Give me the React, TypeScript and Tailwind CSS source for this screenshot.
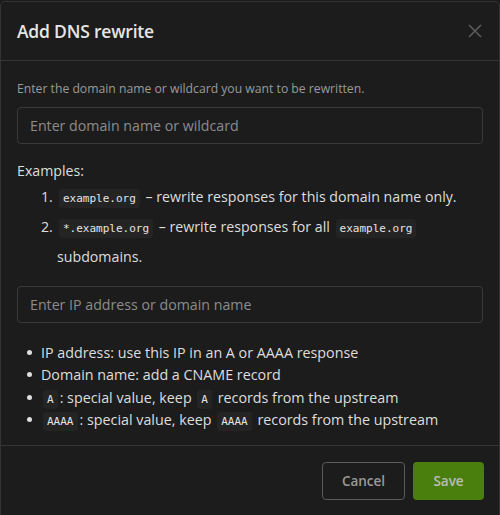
const font = { fontFamily: '"Open Sans", "Noto Sans", sans-serif' };

function Code({ children }: { children: React.ReactNode }) {
  return (
    <code className="mx-[2px] rounded-[3px] bg-[#242424] px-[4px] py-[3px] font-['DejaVu_Sans_Mono',monospace] text-[11px] leading-none text-[#e4e4e4]">
      {children}
    </code>
  );
}

function Dot() {
  return <span className="h-[5px] w-[5px] shrink-0 rounded-full bg-[#dedede]" />;
}

export default function App() {
  return (
    <div className="h-[515px] w-[500px] overflow-hidden bg-[#1c1c1c] pt-px" style={font}>
      <div className="h-[520px] rounded-t-[5px] border border-[#333333] bg-[#1c1c1c] text-[#dedede]">
        {/* Header */}
        <div className="flex h-[59px] items-center justify-between border-b border-[#353535] pl-[16px] pr-[17px]">
          <h2 className="text-[17.5px] font-semibold tracking-[-0.2px] text-[#e6e6e6]">Add DNS rewrite</h2>
          <svg width="14" height="14" viewBox="0 0 14 14" className="text-[#5c5c5c]">
            <path d="M1 1L13 13M13 1L1 13" stroke="currentColor" strokeWidth="1.6" />
          </svg>
        </div>

        {/* Body */}
        <div className="px-[16px] pt-[19px]">
          <p className="text-[12.2px] leading-[18px] text-[#9a9a9a]">
            Enter the domain name or wildcard you want to be rewritten.
          </p>
          <div className="mt-[9px] flex h-[37px] items-center rounded-[4px] border border-[#3a3a3a] px-[12px] text-[14.2px] text-[#8c8c8c]">
            Enter domain name or wildcard
          </div>

          <div className="mt-[16px] text-[14.2px] leading-[22px]">
            <p>Examples:</p>
            <ol className="pl-[24px]">
              <li className="flex leading-[30px]">
                <span className="w-[16px]">1.</span>
                <span>
                  <Code>example.org</Code> – rewrite responses for this domain name only.
                </span>
              </li>
              <li className="flex leading-[30px]">
                <span className="w-[16px] shrink-0">2.</span>
                <span>
                  <Code>*.example.org</Code> – rewrite responses for all <Code>example.org</Code>
                  <br />
                  subdomains.
                </span>
              </li>
            </ol>
          </div>

          <div className="mt-[14px] flex h-[37px] items-center rounded-[4px] border border-[#3a3a3a] px-[12px] text-[14.2px] text-[#8c8c8c]">
            Enter IP address or domain name
          </div>

          <ul className="mt-[18px] pl-[10px] text-[14.3px]">
            <li className="flex h-[22.5px] items-center gap-[9px]">
              <Dot />
              IP address: use this IP in an A or AAAA response
            </li>
            <li className="flex h-[22.5px] items-center gap-[9px]">
              <Dot />
              Domain name: add a CNAME record
            </li>
            <li className="flex h-[22.5px] items-center gap-[9px]">
              <Dot />
              <span>
                <Code>A</Code>: special value, keep <Code>A</Code> records from the upstream
              </span>
            </li>
            <li className="flex h-[22.5px] items-center gap-[9px]">
              <Dot />
              <span>
                <Code>AAAA</Code>: special value, keep <Code>AAAA</Code> records from the upstream
              </span>
            </li>
          </ul>
        </div>

        {/* Footer */}
        <div className="mt-[14px] flex justify-end gap-[8px] border-t border-[#353535] px-[15px] pt-[16px]">
          <button className="h-[38px] w-[83px] rounded-[4px] border border-[#5a5a5a] text-[13.5px] font-semibold text-[#9a9a9a]">
            Cancel
          </button>
          <button className="h-[38px] w-[71px] rounded-[4px] bg-[#4a7f0e] text-[13.5px] font-semibold text-[#bdbdbd]">
            Save
          </button>
        </div>
      </div>
    </div>
  );
}
